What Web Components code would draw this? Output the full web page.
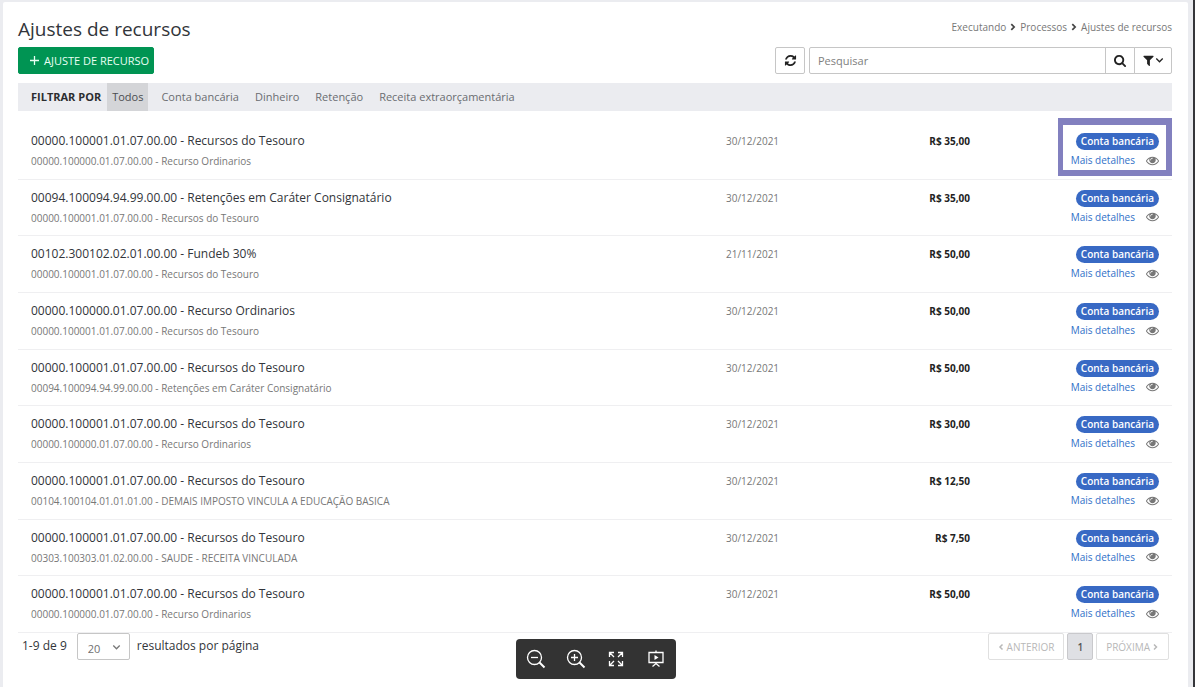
<!DOCTYPE html>
<html lang="pt-BR">
<head>
<meta charset="utf-8">
<meta name="viewport" content="width=device-width, initial-scale=1">
<title>Ajustes de recursos</title>
<style>
  body { margin: 0; background: #ebecf0; color: #32353a; font: 12px/20px "Open Sans", "Noto Sans", sans-serif; }
</style>
</head>
<body>
<ajustes-page></ajustes-page>
<viewer-toolbar></viewer-toolbar>
<script>
const define = (name, html, setup) => customElements.define(name, class extends HTMLElement {
  connectedCallback() {
    if (this.shadowRoot) return;
    const root = this.attachShadow({ mode: 'open' });
    root.innerHTML = '<style>*{box-sizing:border-box}button,input,select{font:inherit;margin:0}</style>' + html;
    if (setup) setup(this, root);
  }
});

const ICONS = {
  search: 'M1152 832q0-185-131.5-316.5t-316.5-131.5-316.5 131.5-131.5 316.5 131.5 316.5 316.5 131.5 316.5-131.5 131.5-316.5zm512 832q0 52-38 90t-90 38q-54 0-90-38l-343-342q-179 124-399 124-143 0-273.5-55.5t-225-150-150-225-55.5-273.5 55.5-273.5 150-225 225-150 273.5-55.5 273.5 55.5 225 150 150 225 55.5 273.5q0 220-124 399l343 343q37 37 37 90z',
  filter: 'M1595 295q17 41-14 70l-493 493v742q0 42-39 59-13 5-25 5-27 0-45-19l-256-256q-19-19-19-45v-486l-493-493q-31-29-14-70 17-39 59-39h1280q42 0 59 39z',
  refresh: 'M1639 1056q0 5-1 7-64 268-268 434.5t-478 166.5q-146 0-282.5-55t-243.5-157l-129 129q-19 19-45 19t-45-19-19-45v-448q0-26 19-45t45-19h448q26 0 45 19t19 45-19 45l-137 137q71 66 161 102t187 36q134 0 250-65t186-179q11-17 53-117 8-23 30-23h192q13 0 22.5 9.5t9.5 22.5zm25-800v448q0 26-19 45t-45 19h-448q-26 0-45-19t-19-45 19-45l138-138q-148-137-349-137-134 0-250 65t-186 179q-11 17-53 117-8 23-30 23h-199q-13 0-22.5-9.5t-9.5-22.5v-7q65-268 270-434.5t480-166.5q146 0 284 55.5t245 156.5l130-129q19-19 45-19t45 19 19 45z',
  eye: 'M1664 960q-152-236-381-353 61 104 61 225 0 185-131.5 316.5t-316.5 131.5-316.5-131.5-131.5-316.5q0-121 61-225-229 117-381 353 133 205 333.5 326.5t434.5 121.5 434.5-121.5 333.5-326.5zm-720-384q0-20-14-34t-34-14q-125 0-214.5 89.5t-89.5 214.5q0 20 14 34t34 14 34-14 14-34q0-86 61-147t147-61q20 0 34-14t14-34zm848 384q0 34-20 69-140 230-376.5 368.5t-499.5 138.5-499.5-139-376.5-368q-20-35-20-69t20-69q140-229 376.5-368t499.5-139 499.5 139 376.5 368q20 35 20 69z'
};
const LINES = {
  down: '<path d="M2 4l5 5 5-5"/>',
  right: '<path d="M4 2l5 5-5 5"/>',
  left: '<path d="M9 2L4 7l5 5"/>',
  plus: '<path d="M7 0v14M0 7h14"/>'
};

define('ui-icon', `
  <style>:host{display:inline-flex;width:13px;height:13px;flex:none} svg{width:100%;height:100%;display:block} g{stroke-width:var(--stroke,2)}</style>
  <svg aria-hidden="true"></svg>`, (host, root) => {
    const name = host.getAttribute('name'), svg = root.querySelector('svg');
    if (ICONS[name]) {
      svg.setAttribute('viewBox', '0 0 1792 1792');
      svg.innerHTML = '<path fill="currentColor" d="' + ICONS[name] + '"/>';
    } else {
      svg.setAttribute('viewBox', '0 0 14 14');
      svg.innerHTML = '<g fill="none" stroke="currentColor">' + LINES[name] + '</g>';
    }
  });

define('bread-crumb', `
  <style>
    :host{display:block;font-size:10px;line-height:16px;color:#777}
    nav{display:flex;align-items:center;gap:3px}
    a{color:inherit;text-decoration:none}
    ui-icon{width:8px;height:8px;color:#444;--stroke:3}
  </style>
  <nav aria-label="Caminho"><a href="#executando">Executando</a><ui-icon name="right"></ui-icon><a href="#processos">Processos</a><ui-icon name="right"></ui-icon><a href="#ajustes">Ajustes de recursos</a></nav>`);

define('action-bar', `
  <style>
    :host{display:flex;justify-content:space-between;align-items:flex-start}
    button{height:27px;padding:0;display:flex;align-items:center;justify-content:center;background:#fff;border:1px solid #c6c6c6;color:#222}
    .new{padding:0 4px 0 11px;gap:5px;background:#009453;border-color:#009453;border-radius:2px;color:#e9fff4;font-size:11px}
    .new ui-icon{width:9px;height:9px}
    form{display:flex;gap:4px;width:397px;max-width:70%}
    .refresh{width:30px;border-radius:2px}
    .group{display:flex;flex:1;min-width:0}
    input{flex:1;min-width:0;height:27px;border:1px solid #c6c6c6;border-radius:2px 0 0 2px;padding:0 8px;font-size:11px;color:#444;background:#fff}
    input::placeholder{color:#808080;opacity:1}
    .group button{width:30px;margin-left:-1px}
    .group .filter{width:38px;border-radius:0 2px 2px 0}
    .filter ui-icon + ui-icon{width:9px;height:9px}
  </style>
  <button class="new" type="button"><ui-icon name="plus"></ui-icon>AJUSTE DE RECURSO</button>
  <form>
    <button class="refresh" type="button" aria-label="Atualizar"><ui-icon name="refresh"></ui-icon></button>
    <div class="group">
      <input type="text" placeholder="Pesquisar" aria-label="Pesquisar">
      <button type="button" aria-label="Buscar"><ui-icon name="search"></ui-icon></button>
      <button class="filter" type="button" aria-label="Filtros"><ui-icon name="filter"></ui-icon><ui-icon name="down"></ui-icon></button>
    </div>
  </form>`);

define('filter-bar', `
  <style>
    :host{display:flex;background:#ebecf0;padding-left:13px;font-size:11px;line-height:28px}
    strong{color:#2b2d30;margin-right:6px}
    nav{display:flex;gap:6px}
    a{color:#6a6c70;text-decoration:none;padding:0 5px}
    a[aria-current]{background:#d4d5d8;color:#4b4d50;margin-right:2px}
  </style>
  <strong>FILTRAR POR</strong>
  <nav aria-label="Filtros"><a href="#todos" aria-current="true">Todos</a><a href="#conta">Conta bancária</a><a href="#dinheiro">Dinheiro</a><a href="#retencao">Retenção</a><a href="#receita">Receita extraorçamentária</a></nav>`);

define('status-badge', `
  <style>:host{display:block;background:#3869c4;color:#fff;border-radius:9px;padding:0 5px;font-size:10px;line-height:17px;font-weight:600}</style>
  <slot></slot>`);

define('recurso-item', `
  <style>
    :host{display:grid;grid-template-columns:minmax(0,1fr) 100px 144px 189px;padding:8px 13px 0;border-bottom:1px solid #efeff1}
    .sub{font-size:10px;color:#777}
    .date,.value{font-size:10px}
    .date{color:#777}
    .value{font-weight:700;text-align:right;color:#222}
    .actions{position:relative;display:flex;flex-direction:column;align-items:flex-end;padding-top:2px}
    .more{display:flex;align-items:center;gap:11px;font-size:10px;color:#777}
    a{color:#3070c8;text-decoration:none}
    :host([highlight]) .actions::after{content:"";position:absolute;top:-13px;right:-13px;width:114px;height:58px;border:solid #8280bf;border-width:7px 6px 6px 5px;pointer-events:none;box-sizing:border-box}
  </style>
  <div><div><slot name="title"></slot></div><div class="sub"><slot name="origin"></slot></div></div>
  <div class="date"><slot name="date"></slot></div>
  <div class="value"><slot name="value"></slot></div>
  <div class="actions"><status-badge>Conta bancária</status-badge><div class="more"><a href="#detalhes">Mais detalhes</a><ui-icon name="eye"></ui-icon></div></div>`);

const ROWS = [
  ['00000.100001.01.07.00.00 - Recursos do Tesouro', '00000.100000.01.07.00.00 - Recurso Ordinarios', '30/12/2021', 'R$ 35,00'],
  ['00094.100094.94.99.00.00 - Retenções em Caráter Consignatário', '00000.100001.01.07.00.00 - Recursos do Tesouro', '30/12/2021', 'R$ 35,00'],
  ['00102.300102.02.01.00.00 - Fundeb 30%', '00000.100001.01.07.00.00 - Recursos do Tesouro', '21/11/2021', 'R$ 50,00'],
  ['00000.100000.01.07.00.00 - Recurso Ordinarios', '00000.100001.01.07.00.00 - Recursos do Tesouro', '30/12/2021', 'R$ 50,00'],
  ['00000.100001.01.07.00.00 - Recursos do Tesouro', '00094.100094.94.99.00.00 - Retenções em Caráter Consignatário', '30/12/2021', 'R$ 50,00'],
  ['00000.100001.01.07.00.00 - Recursos do Tesouro', '00000.100000.01.07.00.00 - Recurso Ordinarios', '30/12/2021', 'R$ 30,00'],
  ['00000.100001.01.07.00.00 - Recursos do Tesouro', '00104.100104.01.01.01.00 - DEMAIS IMPOSTO VINCULA A EDUCAÇÃO BASICA', '30/12/2021', 'R$ 12,50'],
  ['00000.100001.01.07.00.00 - Recursos do Tesouro', '00303.100303.01.02.00.00 - SAUDE - RECEITA VINCULADA', '30/12/2021', 'R$ 7,50'],
  ['00000.100001.01.07.00.00 - Recursos do Tesouro', '00000.100000.01.07.00.00 - Recurso Ordinarios', '30/12/2021', 'R$ 50,00']
];

define('recurso-list', `
  <style>:host{display:grid;grid-auto-rows:1fr;min-height:510px}</style>`, (host, root) => {
    host.setAttribute('role', 'list');
    ROWS.forEach((row, i) => {
      const item = document.createElement('recurso-item');
      item.setAttribute('role', 'listitem');
      if (i === 0) item.setAttribute('highlight', '');
      ['title', 'origin', 'date', 'value'].forEach((slot, n) => {
        const span = document.createElement('span');
        span.slot = slot;
        span.textContent = row[n];
        item.append(span);
      });
      root.append(item);
    });
  });

define('page-footer', `
  <style>
    :host{display:flex;justify-content:space-between;padding:0 3px 0 4px}
    .size,.pages{display:flex}
    .size{line-height:25px;gap:7px}
    .size .count{margin-right:3px}
    .pick{position:relative;display:block}
    select{appearance:none;width:53px;height:27px;border:1px solid #c6c6c6;border-radius:2px;background:#fff;color:#707070;font-size:11px;padding:2px 10px 0}
    .pick ui-icon{position:absolute;right:9px;top:10px;width:9px;height:9px;color:#777;pointer-events:none}
    .pages{gap:3px}
    button{height:27px;display:flex;align-items:center;gap:2px;padding:0 9px;background:#fff;border:1px solid #e0e0e0;border-radius:2px;color:#b8b8b8;font-size:10px}
    button ui-icon{width:7px;height:8px;--stroke:3}
    button.current{background:#dfe0e4;border-color:#c9c9cc;color:#555;font-weight:600}
  </style>
  <div class="size">
    <span class="count">1-9 de 9</span>
    <span class="pick"><select id="n" aria-label="Resultados por página"><option>20</option></select><ui-icon name="down"></ui-icon></span>
    <label for="n">resultados por página</label>
  </div>
  <div class="pages"><button type="button" disabled><ui-icon name="left"></ui-icon>ANTERIOR</button><button type="button" class="current" aria-current="page">1</button><button type="button" disabled>PRÓXIMA<ui-icon name="right"></ui-icon></button></div>`);

define('ajustes-page', `
  <style>
    :host{border-right:2px solid #35363a;padding:2px 5px 0 3px;min-height:100vh;box-sizing:border-box;display:flex}
    main{flex:1;min-width:0;background:#fff;border-radius:2px 2px 0 0;padding:13px 16px 0 15px}
    header{display:flex;justify-content:space-between;align-items:flex-start}
    h1{margin:0 0 4px;font-size:19px;line-height:28px;font-weight:400}
    bread-crumb{padding-top:4px}
    filter-bar{margin:9px 0 12px}
  </style>
  <main>
    <header><h1>Ajustes de recursos</h1><bread-crumb></bread-crumb></header>
    <action-bar></action-bar>
    <filter-bar></filter-bar>
    <recurso-list></recurso-list>
    <page-footer></page-footer>
  </main>`);

define('viewer-toolbar', `
  <style>
    :host{position:fixed;left:0;right:3px;bottom:8px;margin:0 auto;width:160px;height:40px;display:grid;grid-template-columns:repeat(4,1fr);background:#333;border-radius:4px;color:#fff}
    button{background:none;border:0;padding:0;color:inherit;display:flex;align-items:center;justify-content:center}
    svg{width:20px;height:20px;fill:none;stroke:currentColor;stroke-width:1.3}
  </style>
  <button type="button" aria-label="Diminuir zoom"><svg viewBox="0 0 20 20"><circle cx="8.5" cy="8.5" r="7"/><path d="M5 8.5h7"/><path d="M13.5 13.5l5 5" stroke-width="2"/></svg></button>
  <button type="button" aria-label="Aumentar zoom"><svg viewBox="0 0 20 20"><circle cx="8.5" cy="8.5" r="7"/><path d="M5 8.5h7M8.5 5v7"/><path d="M13.5 13.5l5 5" stroke-width="2"/></svg></button>
  <button type="button" aria-label="Tela cheia"><svg viewBox="0 0 20 20"><path d="M3.5 8V3.5H8M3.5 3.5L8 8M12 3.5h4.500V8M16.500 3.500L12 8M3.500 12v4.500H8M3.500 16.500L8 12M16.500 12v4.500H12M16.500 16.500L12 12"/></svg></button>
  <button type="button" aria-label="Apresentação"><svg viewBox="0 0 20 20"><path d="M3 3.500h14v10H3zM10 1.500v2M10 13.500v2M6.500 17.500l3.500-3 3.500 3"/><path d="M8.500 6v5l4-2.500z" fill="currentColor" stroke="none"/></svg></button>`);
</script>
</body>
</html>
